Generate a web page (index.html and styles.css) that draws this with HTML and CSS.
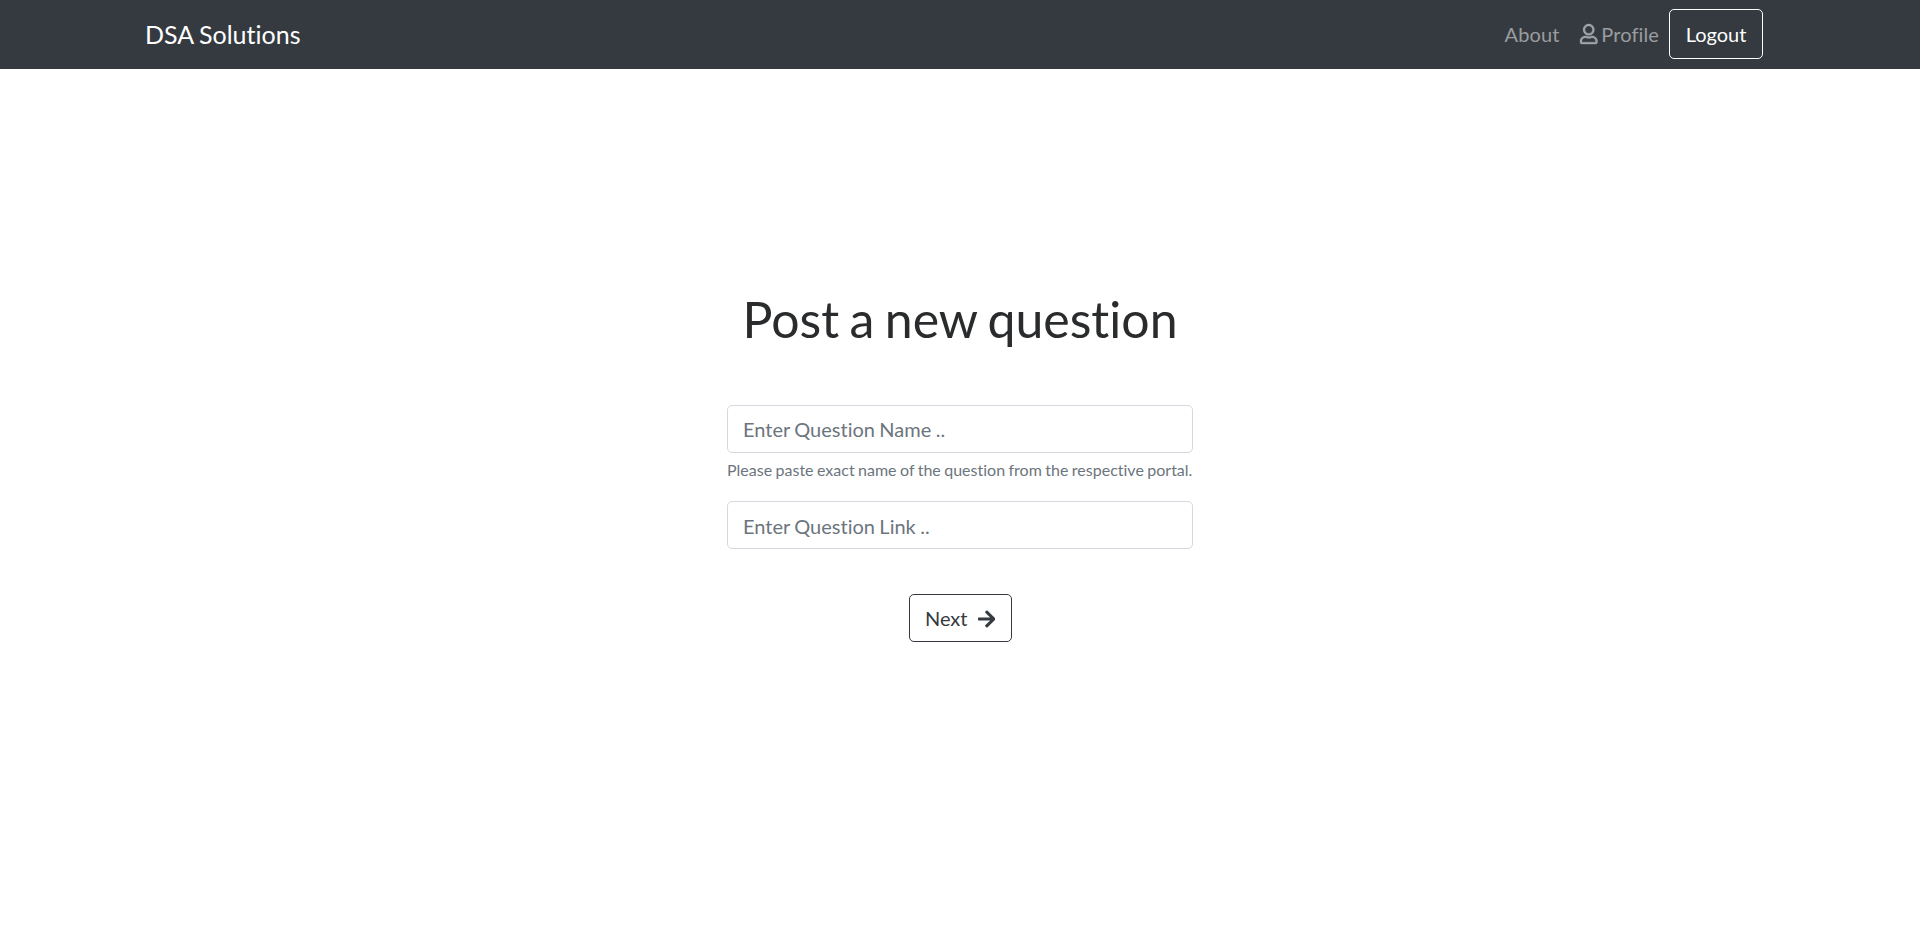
FILE: index.html
```
<!DOCTYPE html>
<html lang="en">
<head>
<meta charset="utf-8">
<title>DSA Solutions</title>
<link rel="stylesheet" href="styles.css">
</head>
<body>
<nav class="navbar">
  <a class="brand">DSA Solutions</a>
  <div class="links">
    <a class="link">About</a>
    <a class="link"><svg class="user" viewBox="0 0 448 512"><path fill="currentColor" stroke="currentColor" stroke-width="10" d="M313.6 304c-28.700 0-42.500 16-89.600 16s-60.800-16-89.600-16C60.200 304 0 364.200 0 438.400V464c0 26.500 21.500 48 48 48h352c26.500 0 48-21.500 48-48v-25.600c0-74.200-60.200-134.400-134.400-134.400zM400 464H48v-25.600c0-47.600 38.800-86.400 86.400-86.400 14.600 0 38.300 16 89.600 16 51.700 0 74.900-16 89.600-16 47.600 0 86.400 38.800 86.400 86.400V464zM224 288c79.500 0 144-64.500 144-144S303.500 0 224 0 80 64.500 80 144s64.500 144 144 144zm0-240c52.900 0 96 43.100 96 96s-43.100 96-96 96-96-43.100-96-96 43.100-96 96-96z"/></svg> Profile</a>
    <button class="btn logout">Logout</button>
  </div>
</nav>
<main class="content">
  <h1 class="title">Post a new question</h1>
  <form class="form">
    <input class="field" type="text" placeholder="Enter Question Name ..">
    <small class="hint">Please paste exact name of the question from the respective portal.</small>
    <input class="field field-link" type="text" placeholder="Enter Question Link ..">
  </form>
  <button class="btn next">Next <svg class="arrow" viewBox="0 0 448 512"><path fill="currentColor" d="M190.500 66.900l22.200-22.200c9.400-9.400 24.600-9.400 33.900 0L441 239c9.400 9.400 9.400 24.600 0 33.900L246.600 467.300c-9.400 9.400-24.600 9.400-33.900 0l-22.200-22.200c-9.500-9.500-9.300-25 .4-34.300L311.400 296H24c-13.300 0-24-10.700-24-24v-32c0-13.300 10.700-24 24-24h287.400L190.900 101.200c-9.800-9.300-10-24.800-.4-34.300z"/></svg></button>
</main>
</body>
</html>
```
FILE: styles.css
```
* { box-sizing: border-box; }
body { margin: 0; background: #fff; color: #212529; font: 20px/30px Lato, sans-serif; font-variant-ligatures: none; }
.navbar { height: 69px; padding: 0 157px 2px 145px; display: flex; align-items: center; justify-content: space-between; background: #343a40; }
.brand { color: #fff; font-size: 25px; word-spacing: -.7px; }
.links { display: flex; align-items: center; }
.link { padding: 0 10px; color: rgba(255,255,255,.5); white-space: nowrap; word-spacing: -1px; letter-spacing: .12px; }
.user { width: 17.5px; height: 20px; vertical-align: -2.5px; overflow: visible; }
.btn { height: 48px; padding: 0 15px; border: 1px solid #343a40; border-radius: 5px; background: transparent; color: #343a40; font: inherit; font-variant-ligatures: none; }
.logout { width: 94px; height: 50px; border-color: #fff; color: #fff; }
.next { width: 103px; }
.content { display: flex; flex-direction: column; align-items: center; padding-top: 220px; }
.title { margin: 0 0 56px; font-size: 50px; line-height: 60px; font-weight: 400; color: #292b2c; word-spacing: -2.4px; }
.form { display: flex; flex-direction: column; width: 466px; margin-bottom: 45px; }
.field { width: 100%; height: 48px; padding: 0 15px; border: 1px solid #d3d9de; border-radius: 5px; font: inherit; font-variant-ligatures: none; word-spacing: -.7px; }
.field::placeholder { color: #6c757d; opacity: 1; }
.field-link { padding-top: 2px; }
.hint { margin: 5px 0 19px; font-size: 16px; line-height: 24px; color: #6c757d; white-space: nowrap; word-spacing: -.65px; }
.arrow { width: 17.5px; height: 20px; margin-left: 5px; vertical-align: -2.5px; }
```
